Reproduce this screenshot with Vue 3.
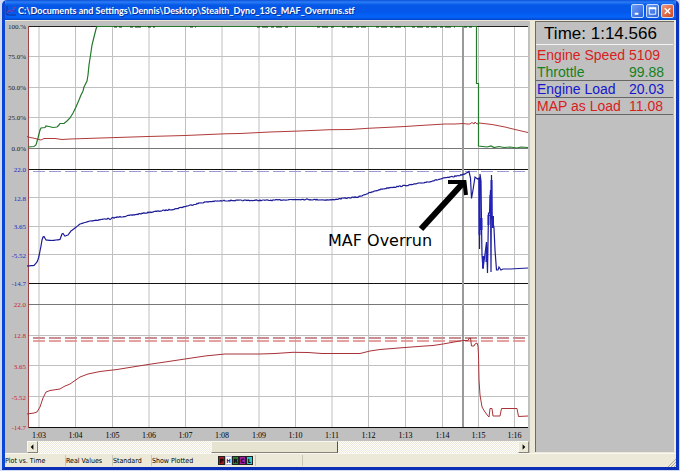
<script setup>
import { ref } from 'vue'

const scroll = ref(49)

const gridX = [39, 75.5, 112.5, 149, 185.5, 222, 259, 295.5, 332, 368.5, 405.5, 442.5, 478.5, 514.5]
const timeLabels = ['1:03', '1:04', '1:05', '1:06', '1:07', '1:08', '1:09', '1:10', '1:11', '1:12', '1:13', '1:14', '1:15', '1:16']
const gridY = [56.5, 87.5, 117.5, 197.5, 226.5, 254.5, 335.5, 365.5, 396.5]

const axes = [
  { tone: 'dark', ticks: [['100.%', 27], ['75.0%', 57], ['50.0%', 88], ['25.0%', 118], ['0.0%', 149]] },
  { tone: 'blue', ticks: [['22.0', 170], ['12.8', 199], ['3.65', 227], ['-5.52', 256], ['-14.7', 284]] },
  { tone: 'red', ticks: [['22.0', 305], ['12.8', 336], ['3.65', 367], ['-5.52', 398], ['-14.7', 428]] }
]

const throttle = '28,147 34,146.5 36,145 38,138 40,130 41,128 45,127.5 46,126 49,126.5 53,127.5 57,127 59,125 60,123.5 64,123.5 67,121 70,118 73,113 76,107 79,100 81,95 83,91 84,87 87,81 88,75 89,65 91,52 92,45 94,37 96,29 97,26.5 476.5,26.5 476.5,83.5 478.5,83.5 478.5,146 487,147 491,146 494,147.5 499,146.5 504,147.5 510,147 517,148 521,147 528,147.5'
const speed = '27,136.5 30,137.5 33,138 37,139 41,140 44,138.5 55,138.5 62,139.5 70,139 101,138 148,136.5 185,135.5 225,133.8 240,133.5 270,132 300,131 330,129.7 350,129.5 368,128.3 405,126.5 420,125.5 445,124 455,124 463,123.5 467,124 470,124 472,122.5 474,124 475,122 477,124 479,123 492,124.5 505,127 515,129.5 528,132.5'
const mapLoad = '27,414 34,413 37,412 40,407 43,398 46,392 50,390.5 60,389 64,386.5 70,384 80,377 88,374 100,371.5 117,369.5 148,364.5 165,362 185,359 205,356 225,354 260,354 275,353.5 293,352.3 308,352.5 322,353.5 360,353.5 370,351 380,349.5 405,347.5 425,346 433,345.5 443,344 454,342 463,340.5 468,340.5 469,338.5 470.5,338 471.5,346 474,346 475,344 477,343 478,346 478.5,355 479,380 480,395 482,407 485,412 488,416 489,417 490,408.5 492,408.5 493,416 500,416 501.5,408.5 517,408.5 518.5,416.5 528,416'

const loadRise = [[27, 266], [34, 265.5], [37, 262], [38.5, 258], [40, 251], [41, 246], [42, 240], [43, 237], [44, 236.5], [46, 240], [52, 240.5], [60, 239.5], [62, 234], [63, 233.5], [65, 236], [68, 235], [71, 231], [75, 228], [80, 224], [90, 221], [109, 218.5], [110, 220], [112, 218], [130, 215.5], [148, 212.5], [160, 211], [175, 209], [185, 206.5], [200, 203], [210, 201.5], [229, 200.5], [270, 200.3], [300, 199.3], [330, 200], [342, 198.5], [358, 197], [366, 194], [380, 189.5], [390, 187.5], [410, 185], [430, 181.5], [445, 178], [454, 176.5], [463, 174.5], [467, 173.5]]
const loadDrop = '469,171.5 470.5,178 471.5,198.5 473,190 475,177 477.5,179 479,178 479.5,249 480,174 481,181 481.5,225 482,255 483,269 485,254 486.5,242 487,259 487.5,273 488.5,213 489.5,213 490.5,190 491,272 491.5,175 492,216 494,228 495,250 496.5,270 498,270 499,267 501,270 503,269 510,269 528,268'

// Sensor jitter is laid over the flat part of the trace.
function jitter(points) {
  const out = []
  let seed = 7
  for (let i = 0; i < points.length - 1; i++) {
    const [x1, y1] = points[i]
    const [x2, y2] = points[i + 1]
    const steps = Math.max(1, Math.round(x2 - x1))
    for (let s = 0; s < steps; s++) {
      const x = x1 + ((x2 - x1) * s) / steps
      seed = (seed * 16807) % 2147483647
      const noise = x > 90 ? seed / 2147483647 - 0.5 : 0
      out.push(`${x.toFixed(1)},${(y1 + ((y2 - y1) * s) / steps + noise).toFixed(1)}`)
    }
  }
  return out.join(' ')
}
const engineLoad = jitter(loadRise) + ' ' + loadDrop

const readings = [
  { name: 'Engine Speed', value: '5109', tone: 'red' },
  { name: 'Throttle', value: '99.88', tone: 'green', rule: true },
  { name: 'Engine Load', value: '20.03', tone: 'blue', rule: true },
  { name: 'MAP as Load', value: '11.08', tone: 'red', rule: true }
]

const flags = [
  { letter: 'P', tone: 'maroon' },
  { letter: 'H', tone: 'white' },
  { letter: 'R', tone: 'forest' },
  { letter: 'C', tone: 'purple' },
  { letter: 'L', tone: 'cyan' }
]
</script>

<template>
  <main class="window">
    <header class="titlebar">
      <svg class="app-icon" viewBox="0 0 10 10" aria-hidden="true">
        <path d="M1 0V9H10" fill="none" stroke="#1c2f8c" />
        <path d="M1 7L3.5 4L5.5 6L9 1" fill="none" stroke="#c03a80" />
        <path d="M1 4L3 7L6 4L8 6L10 3" fill="none" stroke="#3a3cc8" />
      </svg>
      <h1>C:\Documents and Settings\Dennis\Desktop\Stealth_Dyno_13G_MAF_Overruns.stf</h1>
      <button class="caption" aria-label="Minimize">
        <svg viewBox="0 0 12 12"><path d="M3 9H7" stroke="#fff" stroke-width="2" /></svg>
      </button>
      <button class="caption" aria-label="Maximize">
        <svg viewBox="0 0 12 12"><path d="M2.5 3V9.500H9.500V3M2 3H10" fill="none" stroke="#fff" /><path d="M2 3H10" stroke="#fff" stroke-width="2" /></svg>
      </button>
      <button class="caption close" aria-label="Close">
        <svg viewBox="0 0 12 12"><path d="M3 3L9 9M9 3L3 9" stroke="#fff" stroke-width="1.600" /></svg>
      </button>
    </header>

    <div class="body">
      <section class="plot">
        <svg class="chart" viewBox="5 21 524 420" preserveAspectRatio="xMinYMin meet" role="img" aria-label="Plot vs. Time">
          <rect x="28" y="26" width="500" height="402" fill="#fff" />
          <g stroke="#c0c0c0">
            <line v-for="x in gridX" :key="x" :x1="x" :x2="x" y1="27" y2="427" />
            <line v-for="y in gridY" :key="y" x1="28" x2="528" :y1="y" :y2="y" />
          </g>
          <path d="M28 148.500H528M28 304.500H528" stroke="#777" />
          <path d="M28 26.500H528" stroke="#222" />
          <path d="M28 169.500H528M28 283.500H528" stroke="#111" />
          <path d="M28 427.500H528" stroke="#111" />
          <path d="M463 27V427" stroke="#999" stroke-width="2" />
          <path d="M33 171.500H528" stroke="#9a9ad4" stroke-dasharray="12 4" />
          <path d="M33 338H528" stroke="#c98f92" stroke-width="2" stroke-dasharray="12 4" />
          <path d="M33 341H528" stroke="#e08a8a" stroke-width="2" stroke-opacity="0.8" stroke-dasharray="12 4" />
          <path d="M28.500 26V428" stroke="#a04448" />
          <g class="trace">
            <polyline :points="speed" stroke="#b03a3a" />
            <polyline :points="throttle" stroke="#237a2a" stroke-width="1.200" />
            <path d="M114 27H122M130 27H143M148 27H155M190 27H196M257 27H289M317 27H336M342 27H366M376 27H405M412 27H455M464 27H472" stroke="#123d14" stroke-dasharray="3 2 6 3" />
            <polyline :points="engineLoad" stroke="#1c1c96" stroke-width="1.200" />
            <path d="M479.500 179V235M481.500 218V230M483 256V268M486.500 248V262M488.500 215V225M490.500 195V216M491.500 180V216M493 216V228" stroke="#2222bd" stroke-width="2" />
            <polyline :points="mapLoad" stroke="#a83238" />
          </g>
          <path d="M421 229L464 182" stroke="#000" stroke-width="6" fill="none" />
          <path d="M448 182H464.500L466 195" stroke="#000" stroke-width="4" fill="none" />
          <text class="note" x="328" y="246">MAF Overrun</text>
          <g v-for="(axis, i) in axes" :key="i" :class="['axis', axis.tone]">
            <text v-for="tick in axis.ticks" :key="tick[1]" x="26" :y="tick[1] + 2">{{ tick[0] }}</text>
          </g>
          <g class="time-axis">
            <text v-for="(label, i) in timeLabels" :key="label" :x="gridX[i]" y="438">{{ label }}</text>
          </g>
        </svg>
        <div class="scrollbar">
          <button aria-label="Scroll left"><svg viewBox="0 0 10 10"><path d="M6 2V8L3 5Z" /></svg></button>
          <input v-model="scroll" type="range" min="0" max="100" aria-label="Time position" />
          <button aria-label="Scroll right"><svg viewBox="0 0 10 10"><path d="M4 2V8L7 5Z" /></svg></button>
        </div>
      </section>

      <aside class="readout">
        <h2>Time: 1:14.566</h2>
        <table>
          <tbody>
            <tr v-for="r in readings" :key="r.name" :class="[r.tone, { rule: r.rule }]">
              <th scope="row">{{ r.name }}</th>
              <td>{{ r.value }}</td>
            </tr>
          </tbody>
        </table>
      </aside>
    </div>

    <footer class="status">
      <span class="cell mode">Plot vs. Time</span>
      <span class="cell values">Real Values</span>
      <span class="cell units">Standard</span>
      <span class="cell shown">Show Plotted</span>
      <span class="flags">
        <b v-for="f in flags" :key="f.letter" :class="f.tone">{{ f.letter }}</b>
      </span>
      <span class="cell spare"></span>
      <span class="cell rest"></span>
      <svg class="grip" viewBox="0 0 8 8" aria-hidden="true"><path d="M0 8L8 0M3 8L8 3M6 8L8 6" stroke="#aaa791" /></svg>
    </footer>
  </main>
</template>

<style>
body {
  margin: 0;
  background: #cfdaf6;
}
</style>

<style scoped>
* {
  box-sizing: border-box;
}
.window {
  display: flex;
  flex-direction: column;
  height: calc(100vh - 1px);
  margin: 0 1px 1px 2px;
  border: solid #0a46d2;
  border-width: 0 3px 3px;
  border-right-color: #0b35bd;
  border-bottom-color: #0b2eb4;
  border-radius: 5px 5px 0 0;
  overflow: hidden;
  background: #ece9d8;
  font-family: "Liberation Sans", Arial, sans-serif;
}
.titlebar {
  display: flex;
  flex: none;
  align-items: center;
  gap: 2px;
  height: 20px;
  margin: 0 -3px;
  padding: 1px 5px 0 4px;
  background: linear-gradient(#0a50d8 0, #2b7cf6 2px, #0558e6 5px, #0357ea 12px, #0564fb 17px, #0443c8 20px);
}
.app-icon {
  width: 10px;
  height: 10px;
}
h1 {
  flex: 1;
  margin: 0;
  color: #fff;
  font: bold 9px/16px Lato, sans-serif;
  white-space: nowrap;
  text-shadow: 1px 1px #0a2f92;
}
button {
  padding: 0;
  font: inherit;
}
.caption {
  width: 13px;
  height: 14px;
  border: 1px solid #c9dcfb;
  border-radius: 2px;
  background: linear-gradient(135deg, #6f9cf5, #2a62dc);
}
.caption svg {
  display: block;
  width: 11px;
  height: 12px;
}
.close {
  background: linear-gradient(135deg, #ef9a80, #d0441e);
}
.body {
  display: flex;
  flex: 1;
  min-height: 0;
}
.plot {
  display: flex;
  flex: 1;
  flex-direction: column;
  min-width: 0;
  border-top: 1px solid #e9e6d4;
  background: #c0c0c0;
}
.chart {
  display: block;
  flex: 1;
  min-height: 0;
  width: 100%;
}
.trace {
  fill: none;
}
text {
  font-family: "Liberation Serif", serif;
}
.axis text {
  font-size: 7px;
  text-anchor: end;
}
.time-axis text {
  font-size: 8px;
  text-anchor: middle;
}
.axis.dark { fill: #222; }
.axis.blue { fill: #2424c8; }
.axis.red { fill: #d02028; }
.chart .note {
  font: 16px "DejaVu Sans", sans-serif;
}
.scrollbar {
  display: flex;
  flex: none;
  height: 12px;
  margin: 0 1px 0 22px;
}
.scrollbar button {
  flex: none;
  width: 11px;
  border: 1px solid #f8f7f0;
  border-right-color: #85837a;
  border-bottom-color: #85837a;
  background: #ece9d8;
}
.scrollbar svg {
  display: block;
  width: 9px;
  height: 10px;
}
.scrollbar input {
  flex: 1;
  min-width: 0;
  height: 12px;
  margin: 0;
  appearance: none;
  background: repeating-conic-gradient(#fff 0 25%, #ece9d8 0 50%) 0 0 / 2px 2px;
}
.scrollbar input::-webkit-slider-thumb {
  width: 127px;
  height: 12px;
  appearance: none;
  border: 1px solid #f8f7f0;
  border-right-color: #55534a;
  border-bottom-color: #85837a;
  background: #e6e3d0;
}
.readout {
  flex: none;
  width: 146px;
  border: solid #ece9d8;
  border-width: 1px 2px 1px 5px;
  background: #c0c0c0;
  box-shadow: inset 1px 1px #6e6b5e;
}
h2 {
  margin: 2px 1px 0;
  padding-right: 8px;
  border-bottom: 1px solid #f4f4f0;
  font-size: 17px;
  font-weight: 400;
  line-height: 21px;
  text-align: center;
}
table {
  width: calc(100% - 2px);
  margin: 2px 1px;
  border-collapse: separate;
  border-spacing: 0;
  font-size: 14px;
}
th,
td {
  height: 17px;
  padding: 0;
  border-bottom: 1px solid transparent;
  font-weight: 400;
  line-height: 16px;
  text-align: left;
  white-space: nowrap;
}
th {
  width: 93px;
  padding-left: 1px;
}
.rule th,
.rule td {
  border-bottom-color: #666;
}
tr.red { color: #d8201e; }
tr.green { color: #168020; }
tr.blue { color: #1616cc; }
.status {
  display: flex;
  flex: none;
  align-items: center;
  gap: 2px;
  height: 14px;
  border-top: 1px solid #f8f7f0;
  font: 7px/13px "DejaVu Sans Condensed", "DejaVu Sans", sans-serif;
}
.cell {
  height: 11px;
  border-left: 1px solid #c9c6b4;
  white-space: nowrap;
}
.mode { width: 58px; border-left: 0; }
.values { width: 45px; }
.units { width: 37px; }
.shown { width: 65px; }
.spare { width: 45px; }
.rest { flex: 1; }
.flags {
  display: flex;
}
.flags b {
  width: 7px;
  height: 9px;
  border: 1px solid #222;
  font-size: 6px;
  line-height: 7px;
  text-align: center;
}
.maroon { background: #a01c20; }
.white { background: #fff; color: #2020a0; }
.flags .white { border-color: #b8b8e0; }
.forest { background: #2f7f38; }
.purple { background: #a020a0; }
.cyan { background: #30c8d0; }
.grip {
  width: 8px;
  height: 8px;
  align-self: flex-end;
}
</style>
